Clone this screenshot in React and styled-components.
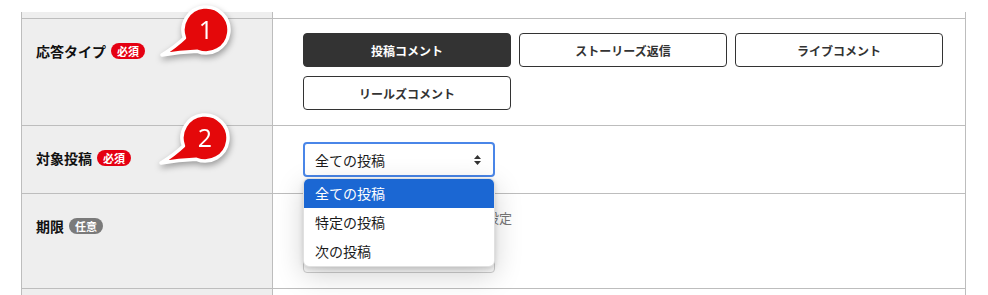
import React from "react";
import styled, { createGlobalStyle } from "styled-components";

const GlobalStyle = createGlobalStyle`
  html, body { margin: 0; padding: 0; background: #fff; }
  body { font-family: "Noto Sans CJK JP", "Noto Sans", sans-serif; color: #111; }
`;

const Page = styled.div`
  position: relative;
  padding: 12px 22px 0 21px;
  height: 295px;
  box-sizing: border-box;
  overflow: hidden;
`;

const Table = styled.div`
  border-left: 1px solid #bdbdbd;
  border-right: 1px solid #bdbdbd;
`;

const Row = styled.div`
  display: grid;
  grid-template-columns: 251px 1fr;
  border-bottom: 1px solid #bdbdbd;
  min-height: ${(p) => p.$h}px;
`;

const LabelCell = styled.div`
  background: #eeeeee;
  border-right: 1px solid #bdbdbd;
  padding: ${(p) => p.$pt ?? 22}px 10px 0 14px;
  display: flex;
  align-items: flex-start;
  gap: 5px;
`;

const LabelText = styled.span`
  font-size: 14px;
  font-weight: 700;
  line-height: 20px;
  color: #111;
`;

const Badge = styled.span`
  margin-top: 2px;
  height: 16px;
  line-height: 16px;
  padding: 0 6px;
  border-radius: 8px;
  font-size: 11px;
  font-weight: 700;
  color: #fff;
  background: ${(p) => (p.$optional ? "#7a7a7a" : "#e50012")};
`;

const ContentCell = styled.div`
  padding: ${(p) => p.$pt}px 22px ${(p) => p.$pb}px 30px;
  display: flex;
  flex-direction: column;
  gap: ${(p) => p.$gap ?? 0}px;
`;

const ButtonGrid = styled.div`
  display: grid;
  grid-template-columns: repeat(3, 208px);
  gap: 9px 8px;
`;

const ChoiceButton = styled.button`
  height: 34px;
  box-sizing: border-box;
  border: 1px solid #333;
  border-radius: 4px;
  background: ${(p) => (p.$active ? "#333" : "#fff")};
  color: ${(p) => (p.$active ? "#fff" : "#333")};
  font-family: inherit;
  font-size: 12px;
  font-weight: 700;
  padding: 0;
  cursor: pointer;
`;

const SelectWrap = styled.div`
  position: relative;
  width: 192px;
`;

const SelectBox = styled.div`
  height: 35px;
  box-sizing: border-box;
  border: 2px solid #4a86e8;
  border-radius: 4px;
  display: flex;
  align-items: center;
  justify-content: space-between;
  padding: 0 12px 0 10px;
  font-size: 14px;
  color: #1a1a1a;
  background: #fff;
`;

const Arrows = styled.svg`
  width: 7px;
  height: 10px;
`;

const Dropdown = styled.ul`
  position: absolute;
  top: 36px;
  left: 0;
  width: 192px;
  margin: 0;
  padding: 0;
  list-style: none;
  background: #fff;
  border: 1px solid rgba(0, 0, 0, 0.12);
  border-radius: 6px;
  box-sizing: border-box;
  overflow: hidden;
  box-shadow: 0 8px 28px rgba(0, 0, 0, 0.18), 0 2px 5px rgba(0, 0, 0, 0.15);
  z-index: 5;
`;

const Option = styled.li`
  height: 29px;
  line-height: 29px;
  padding-left: 11px;
  font-size: 14px;
  color: ${(p) => (p.$selected ? "#fff" : "#1a1a1a")};
  background: ${(p) => (p.$selected ? "#1b67d3" : "transparent")};
`;

const RadioRow = styled.div`
  display: flex;
  align-items: center;
  gap: 17px;
  height: 20px;
`;

const RadioLabel = styled.label`
  display: flex;
  align-items: center;
  gap: 5px;
  font-size: 13px;
  color: #777;
  line-height: 20px;
`;

const RadioDot = styled.span`
  width: 11px;
  height: 11px;
  border-radius: 50%;
  border: 1px solid #999;
  background: #fff;
`;

const DateBox = styled.div`
  width: 192px;
  height: 33px;
  box-sizing: border-box;
  border: 1px solid #cfcfcf;
  border-radius: 4px;
`;

const Stub = styled.div`
  display: grid;
  grid-template-columns: 251px 1fr;
  height: ${(p) => p.$h}px;
  border-bottom: ${(p) => (p.$line ? "1px solid #bdbdbd" : "none")};
`;

const StubLabel = styled.div`
  background: #eeeeee;
  border-right: 1px solid #bdbdbd;
`;

const BubbleSvg = styled.svg`
  position: absolute;
  left: ${(p) => p.$left}px;
  top: ${(p) => p.$top}px;
  overflow: visible;
  filter: drop-shadow(1px 3px 3px rgba(0, 0, 0, 0.35));
  z-index: 10;
`;

function Bubble({ n, left, top }) {
  return (
    <BubbleSvg $left={left} $top={top} width="80" height="62" viewBox="0 0 80 62">
      <path
        d="M30.4 37.9 A23 23 0 1 1 43.4 51.3 Q 26 52 8 55 Q 22 46 30.4 37.9 Z"
        fill="#e4080a"
        stroke="#fff"
        strokeWidth="3.5"
        strokeLinejoin="round"
      />
      <text
        x="52"
        y="39"
        textAnchor="middle"
        fill="#fff"
        fontSize="25"
        fontFamily="'Open Sans', 'Liberation Sans', sans-serif"
      >
        {n}
      </text>
    </BubbleSvg>
  );
}

export default function App() {
  return (
    <>
      <GlobalStyle />
      <Page>
        <Table>
          <Stub $h={6} $line>
            <StubLabel />
            <div />
          </Stub>
          <Row $h={106}>
            <LabelCell>
              <LabelText>応答タイプ</LabelText>
              <Badge>必須</Badge>
            </LabelCell>
            <ContentCell $pt={14} $pb={14}>
              <ButtonGrid>
                <ChoiceButton $active>投稿コメント</ChoiceButton>
                <ChoiceButton>ストーリーズ返信</ChoiceButton>
                <ChoiceButton>ライブコメント</ChoiceButton>
                <ChoiceButton>リールズコメント</ChoiceButton>
              </ButtonGrid>
            </ContentCell>
          </Row>
          <Row $h={67}>
            <LabelCell>
              <LabelText>対象投稿</LabelText>
              <Badge>必須</Badge>
            </LabelCell>
            <ContentCell $pt={16} $pb={15}>
              <SelectWrap>
                <SelectBox>
                  <span>全ての投稿</span>
                  <Arrows viewBox="0 0 7 10">
                    <path d="M3.5 0 L7 4 L0 4 Z M0 6 L7 6 L3.5 10 Z" fill="#333" />
                  </Arrows>
                </SelectBox>
                <Dropdown>
                  <Option $selected>全ての投稿</Option>
                  <Option>特定の投稿</Option>
                  <Option>次の投稿</Option>
                </Dropdown>
              </SelectWrap>
            </ContentCell>
          </Row>
          <Row $h={94}>
            <LabelCell>
              <LabelText>期限</LabelText>
              <Badge $optional>任意</Badge>
            </LabelCell>
            <ContentCell $pt={14} $pb={14} $gap={12}>
              <RadioRow>
                <RadioLabel>
                  <RadioDot />
                  期限を設けない
                </RadioLabel>
                <RadioLabel>
                  <RadioDot />
                  期限を設定
                </RadioLabel>
              </RadioRow>
              <DateBox />
            </ContentCell>
          </Row>
          <Stub $h={10}>
            <StubLabel />
            <div />
          </Stub>
        </Table>
        <Bubble n="1" left={154} top={0} />
        <Bubble n="2" left={153} top={108} />
      </Page>
    </>
  );
}
